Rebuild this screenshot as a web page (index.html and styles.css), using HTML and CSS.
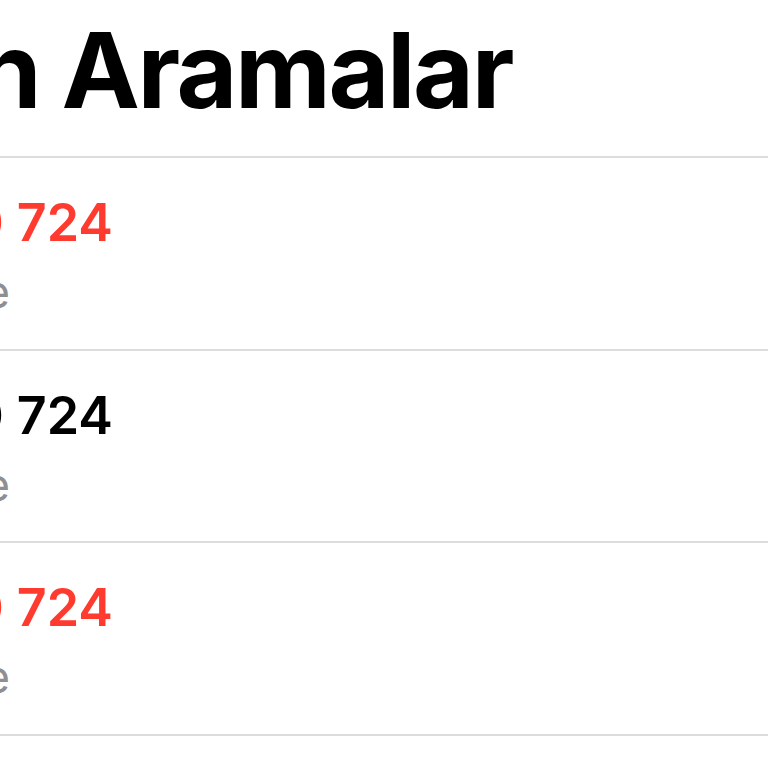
FILE: index.html
```html
<!DOCTYPE html>
<html lang="tr">
<head>
<meta charset="utf-8">
<title>Son Aramalar</title>
<link rel="stylesheet" href="styles.css">
</head>
<body>
<main class="screen">
  <header class="header">
    <div class="clip clip-title"><h1 class="title">Son Aramalar</h1></div>
  </header>
  <ul class="calls">
    <li class="call">
      <div class="clip clip-row"><span class="name missed">0 724</span></div>
      <div class="clip clip-sub"><span class="kind">iPhone</span></div>
    </li>
    <li class="call">
      <div class="clip clip-row"><span class="name">0 724</span></div>
      <div class="clip clip-sub"><span class="kind">iPhone</span></div>
    </li>
    <li class="call">
      <div class="clip clip-row"><span class="name missed">0 724</span></div>
      <div class="clip clip-sub"><span class="kind">iPhone</span></div>
    </li>
  </ul>
</main>
</body>
</html>
```
FILE: styles.css
```css
html, body {
  margin: 0;
  padding: 0;
  background: #ffffff;
  overflow: hidden;
}

.screen {
  width: 768px;
  height: 768px;
  overflow: hidden;
  font-family: Inter, "Liberation Sans", sans-serif;
}

.clip {
  display: flex;
  justify-content: flex-end;
  white-space: nowrap;
}

.header {
  padding-top: 7px;
  height: 158px;
  box-sizing: border-box;
  border-bottom: 2px solid #dcdcdc;
}

.clip-title {
  width: 512px;
}

.title {
  margin: 0;
  font-size: 105px;
  font-weight: 700;
  line-height: 1.2;
  letter-spacing: -2.4px;
  color: #000000;
}

.calls {
  list-style: none;
  margin: 0;
  padding: 0;
}

.call {
  padding-top: 34px;
  box-sizing: content-box;
  height: 156.5px;
  border-bottom: 2px solid #dcdcdc;
}

.clip-row {
  width: 113px;
}

.name {
  font-size: 52px;
  font-weight: 600;
  line-height: 1.2;
  color: #000000;
}

.name.missed {
  color: #ff3b30;
}

.clip-sub {
  width: 10px;
  margin-top: 11px;
}

.kind {
  font-size: 45px;
  font-weight: 400;
  line-height: 1.2;
  color: #8e8e93;
}
```
